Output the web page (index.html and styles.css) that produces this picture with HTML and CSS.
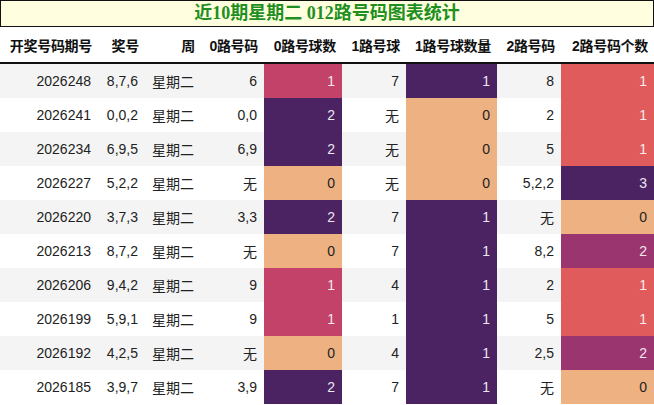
FILE: index.html
```html
<!DOCTYPE html>
<html lang="zh">
<head>
<meta charset="utf-8">
<link rel="stylesheet" href="styles.css">
</head>
<body>
<div class="title">近10期星期二 012路号码图表统计</div>
<table class="grid">
<colgroup>
<col class="c1"><col class="c2"><col class="c3"><col class="c4"><col class="c5"><col class="c6"><col class="c7"><col class="c8"><col class="c9">
</colgroup>
<thead>
<tr><th>开奖号码期号</th><th>奖号</th><th>周</th><th>0路号码</th><th>0路号球数</th><th>1路号球</th><th>1路号球数量</th><th>2路号码</th><th>2路号码个数</th></tr>
</thead>
<tbody>
<tr><td>2026248</td><td>8,7,6</td><td>星期二</td><td>6</td><td class="pink">1</td><td>7</td><td class="purple">1</td><td>8</td><td class="coral">1</td></tr>
<tr><td>2026241</td><td>0,0,2</td><td>星期二</td><td>0,0</td><td class="purple">2</td><td>无</td><td class="peach">0</td><td>2</td><td class="coral">1</td></tr>
<tr><td>2026234</td><td>6,9,5</td><td>星期二</td><td>6,9</td><td class="purple">2</td><td>无</td><td class="peach">0</td><td>5</td><td class="coral">1</td></tr>
<tr><td>2026227</td><td>5,2,2</td><td>星期二</td><td>无</td><td class="peach">0</td><td>无</td><td class="peach">0</td><td>5,2,2</td><td class="purple">3</td></tr>
<tr><td>2026220</td><td>3,7,3</td><td>星期二</td><td>3,3</td><td class="purple">2</td><td>7</td><td class="purple">1</td><td>无</td><td class="peach">0</td></tr>
<tr><td>2026213</td><td>8,7,2</td><td>星期二</td><td>无</td><td class="peach">0</td><td>7</td><td class="purple">1</td><td>8,2</td><td class="magenta">2</td></tr>
<tr><td>2026206</td><td>9,4,2</td><td>星期二</td><td>9</td><td class="pink">1</td><td>4</td><td class="purple">1</td><td>2</td><td class="coral">1</td></tr>
<tr><td>2026199</td><td>5,9,1</td><td>星期二</td><td>9</td><td class="pink">1</td><td>1</td><td class="purple">1</td><td>5</td><td class="coral">1</td></tr>
<tr><td>2026192</td><td>4,2,5</td><td>星期二</td><td>无</td><td class="peach">0</td><td>4</td><td class="purple">1</td><td>2,5</td><td class="magenta">2</td></tr>
<tr><td>2026185</td><td>3,9,7</td><td>星期二</td><td>3,9</td><td class="purple">2</td><td>7</td><td class="purple">1</td><td>无</td><td class="peach">0</td></tr>
</tbody>
</table>
</body>
</html>
```
FILE: styles.css
```css
html, body {
  margin: 0;
  padding: 0;
  background: #ffffff;
}
body {
  width: 654px;
  height: 405px;
  overflow: hidden;
  font-family: "Liberation Sans", "Noto Sans CJK SC", sans-serif;
}
.title {
  box-sizing: border-box;
  height: 27px;
  border: 1px solid #111;
  background: #ffffe0;
  color: #1f8f1f;
  font-family: "Liberation Serif", "Noto Sans CJK SC", serif;
  font-weight: bold;
  font-size: 18px;
  line-height: 25px;
  text-align: center;
}
.grid {
  width: 654px;
  border-collapse: collapse;
  table-layout: fixed;
  font-size: 14px;
  color: #222;
}
.c1 { width: 98px; }
.c2 { width: 47px; }
.c3 { width: 56px; }
.c4 { width: 63px; }
.c5 { width: 78px; }
.c6 { width: 64px; }
.c7 { width: 91px; }
.c8 { width: 64px; }
.c9 { width: 93px; }
.grid th {
  height: 35px;
  padding: 0 6px 0 0;
  text-align: right;
  font-weight: bold;
  font-size: 14px;
  color: #111;
  letter-spacing: -0.3px;
  border-bottom: 2px solid #111;
  white-space: nowrap;
}
.grid td {
  height: 34px;
  padding: 0 7px 0 0;
  text-align: right;
  white-space: nowrap;
}
.grid tbody tr:nth-child(odd) { background: #f4f4f4; }
.grid tbody tr:nth-child(even) { background: #ffffff; }
.grid td.pink { background: #c2426a; color: #f4e6ea; }
.grid td.purple { background: #4b2362; color: #ece6f0; }
.grid td.peach { background: #eeb182; color: #222; }
.grid td.coral { background: #df5b5c; color: #fbeaea; }
.grid td.magenta { background: #9b3570; color: #f4e6ee; }
```
